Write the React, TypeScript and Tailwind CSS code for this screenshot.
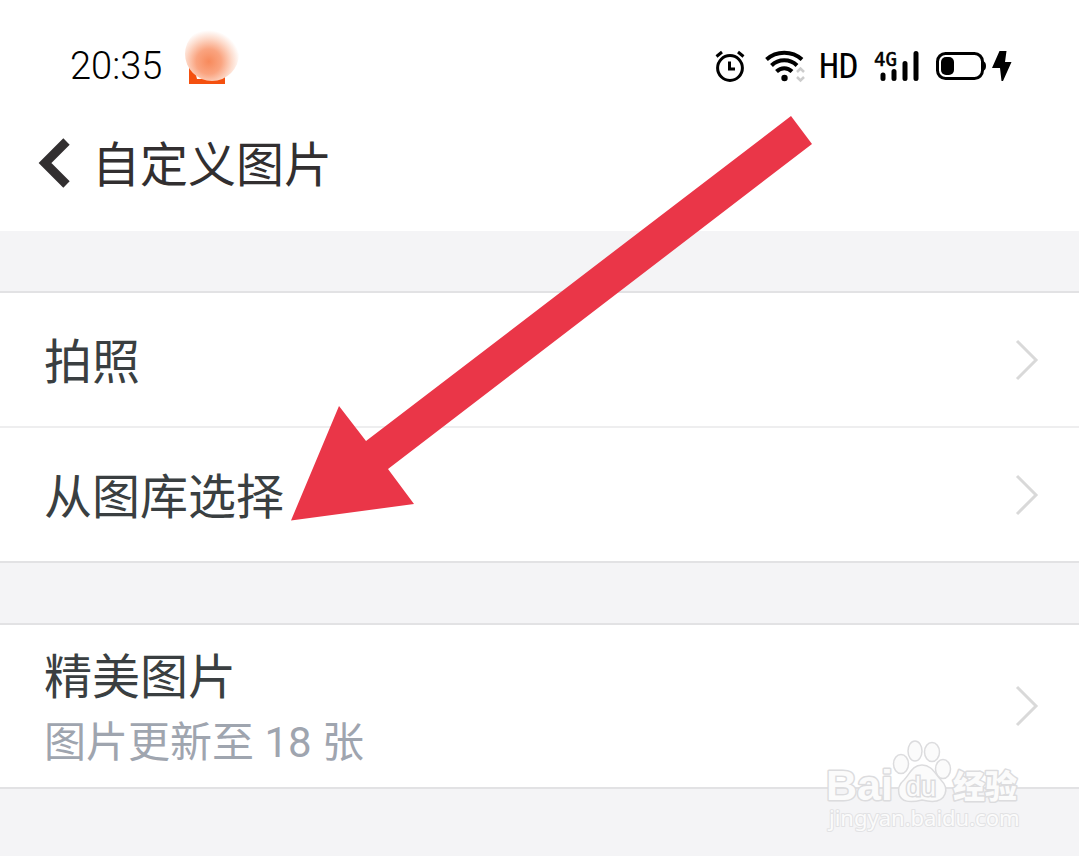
type RowProps = {
  title: string
  subtitle?: string
}

function AlarmIcon() {
  return (
    <svg width="30" height="34" viewBox="0 0 30 34" fill="none" stroke="#000" strokeWidth="3" aria-hidden="true">
      <circle cx="15" cy="19" r="12.4" />
      <path d="M14.5 12.5v7.500h5.500M1.500 7.500 7 3M28.500 7.500 23 3" />
    </svg>
  )
}

function WifiIcon() {
  return (
    <svg width="40" height="34" viewBox="0 0 40 34" fill="none" stroke="#000" strokeWidth="4" aria-hidden="true">
      <path d="M1.500 10.500C11.500 1.500 27 1.500 37 10.500" />
      <path d="M6.500 16.500C13.500 9.500 25 9.500 32 16.500" />
      <path d="M11.500 22.500C16 18 22.500 18 27 22.500" />
      <circle cx="19.500" cy="29" r="3.200" fill="#000" stroke="none" />
      <path d="m32 23 3.500-3.500L39 23M32 28l3.500 3.500L39 28" stroke="#ccc" strokeWidth="2.500" />
    </svg>
  )
}

function SignalIcon() {
  return (
    <svg width="46" height="34" viewBox="0 0 46 34" className="overflow-visible" aria-hidden="true">
      <g className="fill-none stroke-black" strokeWidth="5" strokeLinecap="round">
        <path d="M9 26v3.500M20 22.500v7M31 14.500v15M42 4.500v25" />
      </g>
      <text x="0" y="17" className="text-[19px]" stroke="#000" strokeWidth="0.6" fontFamily="'DejaVu Sans Mono', monospace">
        4G
      </text>
    </svg>
  )
}

function BatteryIcon() {
  return (
    <svg width="50" height="30" viewBox="0 0 50 30" aria-hidden="true">
      <rect x="1.500" y="2.500" width="45" height="25" rx="8" fill="none" stroke="#000" strokeWidth="3" />
      <rect x="5" y="6" width="13" height="18" rx="5" />
      <path d="M47 10c4 1 4 9 0 10z" />
    </svg>
  )
}

function BoltIcon() {
  return (
    <svg width="20" height="32" viewBox="0 0 20 32" aria-hidden="true">
      <path d="M7.500 1 0 18h8l1.500 13h1.500L19.500 12h-6.500L14.500 1z" />
    </svg>
  )
}

function StatusBar() {
  return (
    <div className="flex h-[104px] items-center justify-between pt-7 pr-[67px] pl-[70px] text-black">
      <div className="flex items-center gap-[22px]">
        <time className="font-['Roboto',sans-serif] text-[38px] leading-none font-light">20:35</time>
        <svg width="58" height="62" viewBox="0 0 58 62" className="-mt-4" aria-hidden="true">
          <defs>
            <radialGradient id="glow" cx="0.44" cy="0.64" r="0.58">
              <stop offset="0" stopColor="#f78a5c" />
              <stop offset="0.4" stopColor="#faa480" />
              <stop offset="0.75" stopColor="#fddccd" />
              <stop offset="1" stopColor="#fff" />
            </radialGradient>
          </defs>
          <path d="M5 37h36v20H5z" fill="#f4500f" />
          <path d="M11 44h4l3 8h-5z" fill="#fff" />
          <circle cx="28" cy="27" r="27" fill="url(#glow)" />
        </svg>
      </div>
      <div className="flex items-center">
        <AlarmIcon />
        <span className="w-5" />
        <WifiIcon />
        <span className="mr-3 ml-3.5 w-[43px] font-['DejaVu_Sans_Mono',monospace] text-[33px] leading-none">HD</span>
        <SignalIcon />
        <span className="w-4" />
        <BatteryIcon />
        <span className="w-1.5" />
        <BoltIcon />
      </div>
    </div>
  )
}

function Row({ title, subtitle }: RowProps) {
  return (
    <li>
      <button
        type="button"
        className={`flex w-full items-center justify-between bg-white pr-10 pl-11 text-left ${subtitle ? 'h-[162px]' : 'h-[133px]'}`}
      >
        <span className={subtitle ? 'pt-1' : 'pb-1'}>
          <span className="block text-[48px] leading-[64px] text-[#3a3f41]">{title}</span>
          {subtitle && (
            <span className="block pt-1.5 font-['Roboto','Noto_Sans_CJK_SC',sans-serif] text-[42px] leading-[64px] text-[#9fa5af]">
              {subtitle}
            </span>
          )}
        </span>
        <svg width="24" height="42" viewBox="0 0 24 42" fill="none" stroke="#d9d9d9" strokeWidth="3" aria-hidden="true">
          <path d="m2 2 19 19L2 40" />
        </svg>
      </button>
    </li>
  )
}

function Watermark() {
  return (
    <svg
      width="200"
      height="96"
      viewBox="0 0 200 96"
      className="pointer-events-none absolute top-[738px] right-[57px]"
      fill="#fbfbfb"
      stroke="#dcdcde"
      strokeWidth="1.500"
      aria-hidden="true"
    >
      <g fontFamily="'Liberation Sans', sans-serif" fontWeight="700">
        <text x="4" y="62" className="text-[43px]" strokeWidth="3" strokeLinejoin="round" paintOrder="stroke">
          Bai
        </text>
        <ellipse cx="79" cy="26" rx="7.500" ry="9.500" />
        <ellipse cx="93" cy="13" rx="7" ry="10" />
        <ellipse cx="110" cy="14" rx="7.500" ry="9.500" />
        <ellipse cx="121" cy="31" rx="7.500" ry="9.500" />
        <path d="M100 27c-10 0-12 9-18 15-6 5-6 10-5 14 2 8 11 9 23 6 12 3 20 2 23-6 2-5 1-9-4-14-6-6-9-15-19-15z" />
        <text x="84" y="58" className="text-[27px]" fontWeight="400" strokeWidth="3" paintOrder="stroke">
          du
        </text>
        <text
          x="131"
          y="60"
          className="text-[32px]"
          fontFamily="'Noto Sans CJK SC', sans-serif"
          fontWeight="900"
          strokeWidth="3"
          strokeLinejoin="round"
          paintOrder="stroke"
        >
          经验
        </text>
      </g>
      <text x="7" y="88" className="text-[22px]" fontFamily="'Noto Sans', sans-serif" stroke="#e2e2e4" strokeWidth="2" strokeLinejoin="round" paintOrder="stroke">
        jingyan.baidu.com
      </text>
    </svg>
  )
}

export default function App() {
  return (
    <div className="relative min-h-screen overflow-hidden bg-[#f4f4f6] font-['Noto_Sans_CJK_SC',sans-serif]">
      <header className="bg-white">
        <StatusBar />
        <div className="flex h-[127px] items-start gap-[22px] pt-[25px] pl-[38px]">
          <button type="button" aria-label="返回" className="pt-[9px]">
            <svg width="32" height="50" viewBox="0 0 32 50" fill="none" stroke="#322f30" strokeWidth="9">
              <path d="M28.500 3.500 7 25l21.500 21.500" />
            </svg>
          </button>
          <h1 className="text-[48px] leading-[64px] text-[#322f30]">自定义图片</h1>
        </div>
      </header>

      <main>
        <ul className="mt-[60px] divide-y-2 divide-[#eeeeef] border-y-2 border-[#e2e2e4]">
          <Row title="拍照" />
          <Row title="从图库选择" />
        </ul>
        <ul className="mt-[60px] border-y-2 border-[#e2e2e4]">
          <Row title="精美图片" subtitle="图片更新至 18 张" />
        </ul>
      </main>

      {/* Pointer to the gallery option */}
      <svg width="521" height="405" viewBox="0 0 521 405" className="pointer-events-none absolute top-[116px] left-[291px]" aria-hidden="true">
        <path d="M0 404.500 48 290l27 35L500 0l21 28L97 353l26 35z" fill="#ea3648" />
      </svg>

      <Watermark />
    </div>
  )
}
